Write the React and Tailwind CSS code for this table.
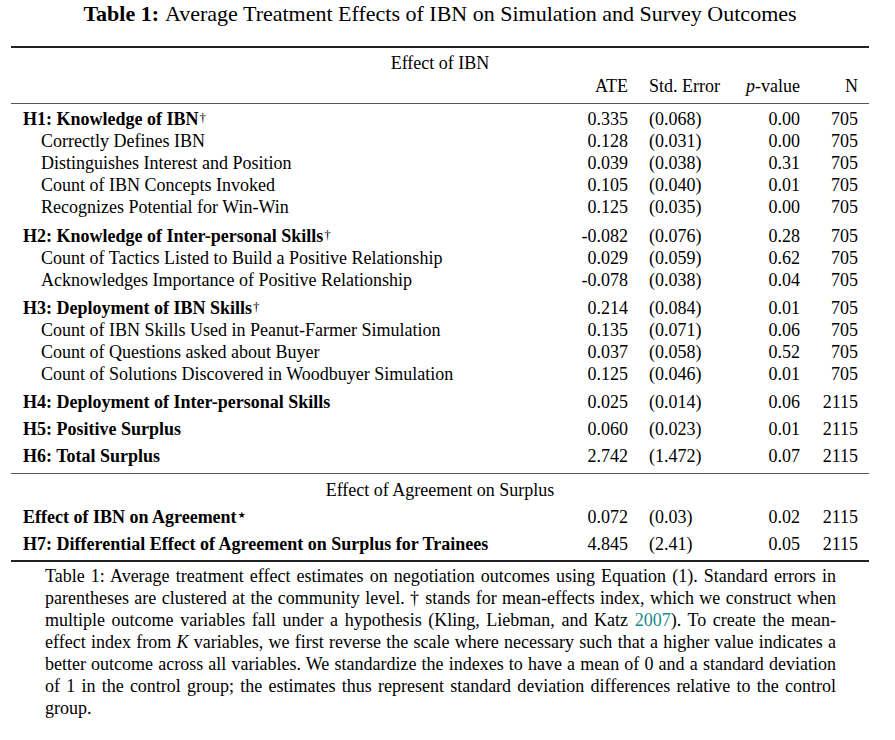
import React from "react";

const serif = { fontFamily: '"Liberation Serif", "Times New Roman", serif' };

function Row({ label, bold, indent, sup, star, ate, se, p, n, className = "" }) {
  return (
    <div className={`flex h-[22px] items-center ${className}`}>
      <div className={`w-[547px] ${indent ? "pl-[18px]" : ""} ${bold ? "font-bold" : ""} whitespace-nowrap`}>
        {label}
        {sup && <sup className="text-[13px] font-normal relative top-[-3px] ml-[1px]">{sup}</sup>}
        {star && (
          <sup className="text-[9px] relative top-[-5px] ml-[1px]" style={{ fontFamily: '"DejaVu Sans", sans-serif' }}>★</sup>
        )}
      </div>
      <div className="w-[58px] text-right whitespace-nowrap">{ate}</div>
      <div className="w-[21px]" />
      <div className="w-[90px] whitespace-nowrap">{se}</div>
      <div className="w-[61px] text-right whitespace-nowrap">{p}</div>
      <div className="w-[58px] text-right whitespace-nowrap">{n}</div>
    </div>
  );
}

export default function App() {
  return (
    <div className="w-[895px] h-[740px] bg-white text-black text-[18px] leading-[22px]" style={serif}>
      <div className="w-[880px] h-[28px] flex items-center justify-center text-[22px] whitespace-nowrap">
        <span className="font-bold">Table 1:</span>
        <span className="ml-[6px]">Average Treatment Effects of IBN on Simulation and Survey Outcomes</span>
      </div>
      <div className="ml-[11px] w-[858px]">
        <div className="mt-[18px] border-t-2 border-[#222]" />
        <div className="mt-[4px] h-[22px] flex items-center justify-center">Effect of IBN</div>
        <div className="pl-[12px] mt-[1px]">
          <Row label="" ate="ATE" se="Std. Error" p={<span><i>p</i>-value</span>} n="N" />
        </div>
        <div className="mt-[6px] border-t border-[#555]" />
        <div className="pl-[12px]">
          <Row className="mt-[4px]" label="H1: Knowledge of IBN" bold sup="†" ate="0.335" se="(0.068)" p="0.00" n="705" />
          <Row label="Correctly Defines IBN" indent ate="0.128" se="(0.031)" p="0.00" n="705" />
          <Row label="Distinguishes Interest and Position" indent ate="0.039" se="(0.038)" p="0.31" n="705" />
          <Row label="Count of IBN Concepts Invoked" indent ate="0.105" se="(0.040)" p="0.01" n="705" />
          <Row label="Recognizes Potential for Win-Win" indent ate="0.125" se="(0.035)" p="0.00" n="705" />
          <Row className="mt-[7px]" label="H2: Knowledge of Inter-personal Skills" bold sup="†" ate="-0.082" se="(0.076)" p="0.28" n="705" />
          <Row label="Count of Tactics Listed to Build a Positive Relationship" indent ate="0.029" se="(0.059)" p="0.62" n="705" />
          <Row label="Acknowledges Importance of Positive Relationship" indent ate="-0.078" se="(0.038)" p="0.04" n="705" />
          <Row className="mt-[6px]" label="H3: Deployment of IBN Skills" bold sup="†" ate="0.214" se="(0.084)" p="0.01" n="705" />
          <Row label="Count of IBN Skills Used in Peanut-Farmer Simulation" indent ate="0.135" se="(0.071)" p="0.06" n="705" />
          <Row label="Count of Questions asked about Buyer" indent ate="0.037" se="(0.058)" p="0.52" n="705" />
          <Row label="Count of Solutions Discovered in Woodbuyer Simulation" indent ate="0.125" se="(0.046)" p="0.01" n="705" />
          <Row className="mt-[6px]" label="H4: Deployment of Inter-personal Skills" bold ate="0.025" se="(0.014)" p="0.06" n="2115" />
          <Row className="mt-[5px]" label="H5: Positive Surplus" bold ate="0.060" se="(0.023)" p="0.01" n="2115" />
          <Row className="mt-[5px]" label="H6: Total Surplus" bold ate="2.742" se="(1.472)" p="0.07" n="2115" />
        </div>
        <div className="mt-[6px] border-t border-[#555]" />
        <div className="mt-[5px] h-[22px] flex items-center justify-center">Effect of Agreement on Surplus</div>
        <div className="pl-[12px]">
          <Row className="mt-[5px]" label="Effect of IBN on Agreement" bold star ate="0.072" se="(0.03)" p="0.02" n="2115" />
          <Row className="mt-[5px]" label="H7: Differential Effect of Agreement on Surplus for Trainees" bold ate="4.845" se="(2.41)" p="0.05" n="2115" />
        </div>
        <div className="mt-[5px] border-t-2 border-[#222]" />
      </div>
      <div className="ml-[45px] w-[791px] mt-[3px]">
        <div className="text-justify [text-align-last:justify] whitespace-nowrap">
          Table 1: Average treatment effect estimates on negotiation outcomes using Equation (1). Standard errors in
        </div>
        <div className="text-justify [text-align-last:justify] whitespace-nowrap">
          parentheses are clustered at the community level. † stands for mean-effects index, which we construct when
        </div>
        <div className="text-justify [text-align-last:justify] whitespace-nowrap">
          multiple outcome variables fall under a hypothesis (Kling, Liebman, and Katz <span className="text-[#1a8a8a]">2007</span>). To create the mean-
        </div>
        <div className="text-justify [text-align-last:justify] whitespace-nowrap">
          effect index from <i>K</i> variables, we first reverse the scale where necessary such that a higher value indicates a
        </div>
        <div className="text-justify [text-align-last:justify] whitespace-nowrap">
          better outcome across all variables. We standardize the indexes to have a mean of 0 and a standard deviation
        </div>
        <div className="text-justify [text-align-last:justify] whitespace-nowrap">
          of 1 in the control group; the estimates thus represent standard deviation differences relative to the control
        </div>
        <div>group.</div>
      </div>
    </div>
  );
}
